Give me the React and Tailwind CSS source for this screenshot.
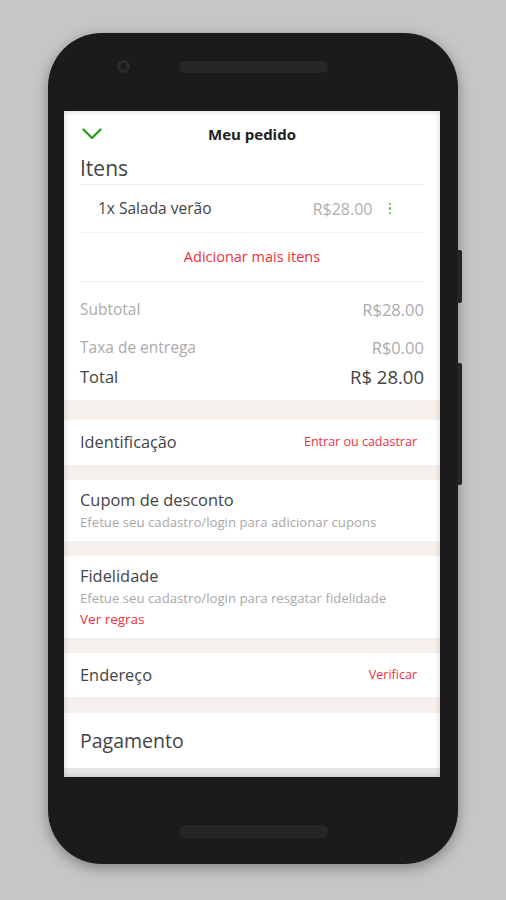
const font = { fontFamily: '"Open Sans", Lato, sans-serif' }

function Band({ h }) {
  return <div className={`${h} bg-[#f5f0ec]`} />
}

function Chevron() {
  return (
    <svg width="20" height="12" viewBox="0 0 20 12" fill="none">
      <polyline points="1.5,1.5 10,10 18.5,1.5" stroke="#2e9e1f" strokeWidth="2.4" strokeLinecap="round" strokeLinejoin="round" />
    </svg>
  )
}

function Screen() {
  return (
    <div className="relative ml-[16px] flex h-[666px] w-[376px] flex-col self-start overflow-hidden bg-white text-[#444]" style={font}>
      <div className="relative flex h-[46px] items-center justify-center">
        <div className="absolute left-[18px] top-[17px]">
          <Chevron />
        </div>
        <span className="text-[15px] font-bold text-[#222]">Meu pedido</span>
      </div>

      <div className="px-4">
        <div className="flex h-[28px] items-center border-b border-[#efefef] pb-[4px] text-[21px]">Itens</div>
        <div className="flex h-[48px] items-center border-b border-[#f3f3f3] pl-[18px] pr-[33px] text-[15.5px]">
          <span className="flex-1">1x Salada verão</span>
          <span className="text-[16px] text-[#b0b0b0]">R$28.00</span>
          <span className="ml-[16px] flex flex-col gap-[2px]">
            <span className="h-[2.5px] w-[2.5px] rounded-full bg-[#58b62c]" />
            <span className="h-[2.5px] w-[2.5px] rounded-full bg-[#58b62c]" />
            <span className="h-[2.5px] w-[2.5px] rounded-full bg-[#58b62c]" />
          </span>
        </div>
        <div className="flex h-[49px] items-center justify-center border-b border-[#f0f0f0] text-[14.5px] text-[#f0303c]">
          Adicionar mais itens
        </div>
        <div className="pt-[9px] pb-[13px] text-[15.5px]">
          <div className="flex h-[38px] items-center justify-between text-[#ababab]">
            <span>Subtotal</span>
            <span className="text-[16.5px]">R$28.00</span>
          </div>
          <div className="flex h-[38px] items-center justify-between text-[#ababab]">
            <span>Taxa de entrega</span>
            <span className="text-[16.5px]">R$0.00</span>
          </div>
          <div className="flex h-[20px] items-center justify-between">
            <span className="text-[16.5px]">Total</span>
            <span className="text-[18.5px]">R$ 28.00</span>
          </div>
        </div>
      </div>

      <Band h="h-[20px]" />
      <div className="flex h-[45px] items-center justify-between pl-4 pr-[23px]">
        <span className="text-[16.3px]">Identificação</span>
        <span className="text-[12.5px] text-[#f0303c]">Entrar ou cadastrar</span>
      </div>
      <Band h="h-[15px]" />
      <div className="flex h-[61px] flex-col justify-center px-4">
        <span className="text-[16.4px] leading-[22px]">Cupom de desconto</span>
        <span className="text-[13.2px] leading-[22px] text-[#a8a8a8]">Efetue seu cadastro/login para adicionar cupons</span>
      </div>
      <Band h="h-[15px]" />
      <div className="flex h-[82px] flex-col justify-center px-4">
        <span className="text-[16.4px] leading-[22px]">Fidelidade</span>
        <span className="text-[13.2px] leading-[22px] text-[#a8a8a8]">Efetue seu cadastro/login para resgatar fidelidade</span>
        <span className="text-[13.5px] leading-[20px] text-[#f0303c]">Ver regras</span>
      </div>
      <Band h="h-[15px]" />
      <div className="flex h-[44px] items-center justify-between pl-4 pr-[23px]">
        <span className="text-[16.4px]">Endereço</span>
        <span className="text-[12.5px] text-[#f0303c]">Verificar</span>
      </div>
      <Band h="h-[16px]" />
      <div className="flex h-[55px] items-center px-4">
        <span className="text-[19.5px]">Pagamento</span>
      </div>
      <div className="flex-1 bg-[#e8e6e4]" />
      <div className="pointer-events-none absolute inset-0 shadow-[inset_0_0_6px_rgba(0,0,0,0.18)]" />
    </div>
  )
}

function Phone() {
  return (
    <div className="relative flex h-[831px] w-[410px] flex-col items-center rounded-[54px] bg-[#1b1b1b] shadow-[0_4px_14px_rgba(0,0,0,0.35)]">
      <div className="absolute right-[-4px] top-[217px] h-[53px] w-[5px] rounded-r-[2px] bg-[#252525]" />
      <div className="absolute right-[-4px] top-[330px] h-[122px] w-[5px] rounded-r-[2px] bg-[#252525]" />
      <div className="relative flex h-[78px] w-full items-start justify-center pt-[28px]">
        <div className="absolute left-[69px] top-[27px] h-[13px] w-[13px] rounded-full bg-[#2c2c2c] p-[3px]">
          <div className="h-full w-full rounded-full bg-[#1d1d1d]" />
        </div>
        <div className="h-[12px] w-[149px] rounded-full bg-[#262626]" />
      </div>
      <Screen />
      <div className="flex flex-1 items-start justify-center pt-[48px]">
        <div className="h-[13px] w-[149px] rounded-full bg-[#262626]" />
      </div>
    </div>
  )
}

export default function App() {
  return (
    <div className="flex h-[900px] w-full justify-center bg-[#c6c6c6] pt-[33px]">
      <Phone />
    </div>
  )
}
